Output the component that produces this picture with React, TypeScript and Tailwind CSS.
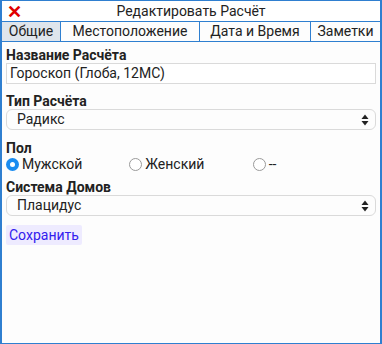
import { useState } from "react";

const tabs = [
  { label: "Общие", w: "w-[59px]" },
  { label: "Местоположение", w: "w-[139px]" },
  { label: "Дата и Время", w: "w-[111px]" },
  { label: "Заметки", w: "flex-1" },
];

function SelectArrows() {
  return (
    <svg width="8" height="12" viewBox="0 0 8 12" className="shrink-0">
      <path d="M4 0.5 L7.5 5 H0.5 Z" fill="#222" />
      <path d="M4 11.5 L7.5 7 H0.5 Z" fill="#222" />
    </svg>
  );
}

function Radio({ checked, label }: { checked?: boolean; label: string }) {
  return (
    <label className="flex items-center gap-[3px] flex-1">
      {checked ? (
        <span className="w-[13px] h-[13px] rounded-full bg-[#1a8cf0] flex items-center justify-center">
          <span className="w-[5px] h-[5px] rounded-full bg-white" />
        </span>
      ) : (
        <span className="w-[13px] h-[13px] rounded-full border border-[#9a9a9a] bg-white" />
      )}
      <span>{label}</span>
    </label>
  );
}

export default function App() {
  const [active] = useState(0);

  return (
    <div className="w-[382px] h-[344px] bg-[#fdfdfd] border border-[#2f7fd0] border-l-2 border-r-2 flex flex-col font-['Roboto',sans-serif] text-[14px] text-[#222]">
      {/* === Title Bar === */}
      <div className="h-[20px] flex items-center relative bg-white">
        <span className="absolute left-[5px] top-[2px] text-[#e00000] font-bold text-[18px] leading-[18px]">✕</span>
        <div className="flex-1 text-center leading-[20px]">Редактировать Расчёт</div>
      </div>

      {/* === Tabs === */}
      <div className="flex border-t border-b border-[#2f7fd0] h-[21px] leading-[19px]">
        {tabs.map((t, i) => (
          <div
            key={t.label}
            className={
              "text-center border-r border-[#2f7fd0] last:border-r-0 " +
              t.w +
              (i === active ? " bg-[#dfe5ec]" : "")
            }
          >
            {t.label}
          </div>
        ))}
      </div>

      {/* === Form === */}
      <div className="px-[4px] pt-[5px] flex flex-col">
        <div className="font-bold leading-[16px]">Название Расчёта</div>
        <div className="h-[21px] border border-[#dadada] bg-white px-[3px] leading-[19px]">
          Гороскоп (Глоба, 12МС)
        </div>

        <div className="font-bold leading-[16px] mt-[9px]">Тип Расчёта</div>
        <div className="h-[21px] border border-[#dadada] rounded-[6px] bg-[#fdfdfd] pl-[10px] pr-[6px] flex items-center justify-between">
          <span>Радикс</span>
          <SelectArrows />
        </div>

        <div className="font-bold leading-[16px] mt-[10px]">Пол</div>
        <div className="flex h-[16px] items-center">
          <Radio checked label="Мужской" />
          <Radio label="Женский" />
          <Radio label="--" />
        </div>

        <div className="font-bold leading-[16px] mt-[7px]">Система Домов</div>
        <div className="h-[21px] border border-[#dadada] rounded-[6px] bg-[#fdfdfd] pl-[10px] pr-[6px] flex items-center justify-between">
          <span>Плацидус</span>
          <SelectArrows />
        </div>

        <div className="mt-[9px]">
          <button className="bg-[#eeebff] text-[#3320ee] px-[3px] h-[20px] leading-[20px] rounded-[2px]">
            Сохранить
          </button>
        </div>
      </div>
    </div>
  );
}
